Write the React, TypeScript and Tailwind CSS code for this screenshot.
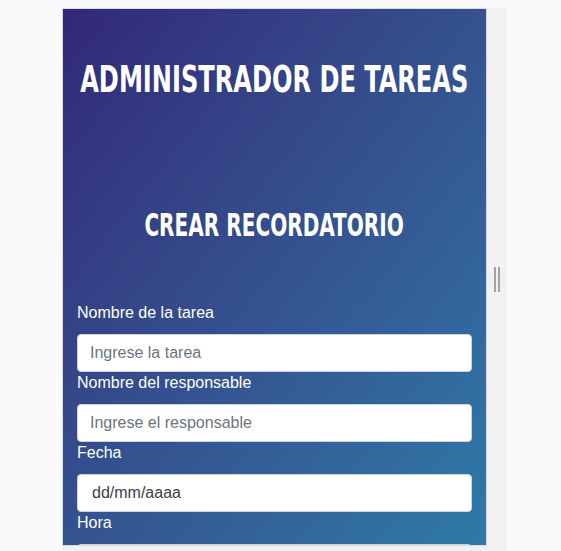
const fields = [
  { label: "Nombre de la tarea", placeholder: "Ingrese la tarea" },
  { label: "Nombre del responsable", placeholder: "Ingrese el responsable" },
  { label: "Fecha", value: "dd/mm/aaaa" },
  { label: "Hora", value: "" },
];

const App: React.FC = () => {
  return (
    <div className="min-h-[551px] bg-[#fafafa] pt-2 pl-[62px] font-['Liberation_Sans',Arial,sans-serif]">
      <div className="flex h-[543px] w-[445px] bg-[#f1f1f1]">
        <div className="h-[538px] w-[425px] shrink-0 overflow-hidden border border-[#d9dbe8] bg-linear-to-br from-[#322877] to-[#2d7aa8] px-[14px]">
          <h1 className="mt-[48px] flex justify-center text-[38px] leading-[44px] font-bold whitespace-nowrap text-white">
            <span className="inline-block shrink-0 scale-x-[0.705] font-['DejaVu_Sans_Condensed','DejaVu_Sans',sans-serif]">
              ADMINISTRADOR DE TAREAS
            </span>
          </h1>
          <h2 className="mt-[106px] flex justify-center text-[32px] leading-[36px] font-bold whitespace-nowrap text-white">
            <span className="inline-block shrink-0 scale-x-[0.697] font-['DejaVu_Sans_Condensed','DejaVu_Sans',sans-serif]">
              CREAR RECORDATORIO
            </span>
          </h2>
          <form className="mt-[61px]">
            {fields.map((f) => (
              <div key={f.label}>
                <label className="block text-[16px] leading-[18px] text-white">
                  {f.label}
                </label>
                <div className="mt-3 mb-[2px] flex h-[38px] w-full items-center rounded border border-[#ced4da] bg-white px-3">
                  {f.placeholder ? (
                    <input
                      type="text"
                      readOnly
                      placeholder={f.placeholder}
                      className="w-full bg-transparent text-[16px] outline-none placeholder:text-[#6c757d]"
                    />
                  ) : (
                    <span className="pl-[2px] text-[16px] text-[#3a3f44]">{f.value}</span>
                  )}
                </div>
              </div>
            ))}
          </form>
        </div>
        <div className="flex flex-1 items-center justify-center">
          <div className="flex h-[25px] gap-[2px]">
            <div className="w-[2px] bg-[#a3a3a3]" />
            <div className="w-[2px] bg-[#a3a3a3]" />
          </div>
        </div>
      </div>
    </div>
  );
};

export default App;
